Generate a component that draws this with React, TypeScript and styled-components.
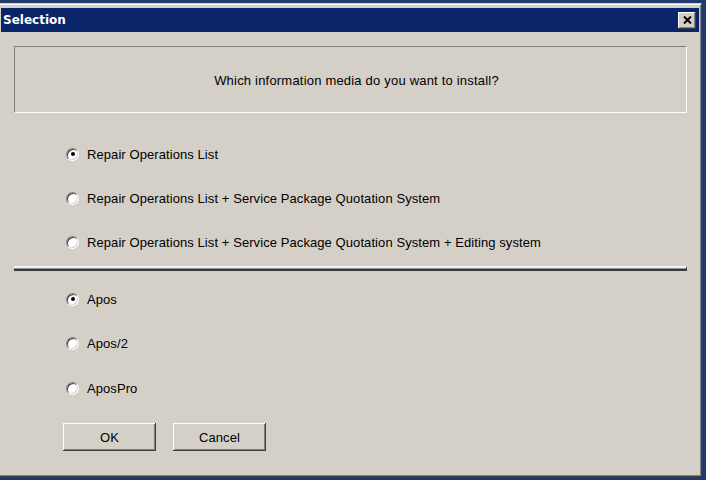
import styled, { createGlobalStyle } from 'styled-components';

const GlobalStyle = createGlobalStyle`
  html, body {
    margin: 0;
    padding: 0;
    background: #1f3a6b;
  }
  body {
    font-family: "Liberation Sans", Arial, sans-serif;
  }
`;

const Desktop = styled.div`
  width: 706px;
  height: 480px;
  background: #1f3a6b;
  display: flex;
  flex-direction: column;
  padding-top: 3px;
  box-sizing: border-box;
`;

const Window = styled.div`
  width: 702px;
  height: 474px;
  box-sizing: border-box;
  background: #d4d0c8;
  border-top: 1px solid #d4d0c8;
  border-right: 1px solid #404040;
  border-bottom: 1px solid #404040;
  box-shadow: inset 0 1px 0 #ffffff, inset -1px -1px 0 #808080;
  padding: 4px 2px 2px 1px;
  display: flex;
  flex-direction: column;
`;

const TitleBar = styled.div`
  height: 24px;
  background: #0a246a;
  display: flex;
  align-items: center;
  justify-content: space-between;
  padding: 0 3px 0 2px;
`;

const Title = styled.span`
  font-family: "DejaVu Sans", Tahoma, sans-serif;
  font-weight: bold;
  font-size: 12px;
  color: #ffffff;
`;

const CloseButton = styled.button`
  width: 18px;
  height: 17px;
  padding: 0;
  background: #d4d0c8;
  border: none;
  box-shadow: inset -1px -1px 0 #404040, inset 1px 1px 0 #ffffff,
    inset -2px -2px 0 #808080;
  display: flex;
  align-items: center;
  justify-content: center;
`;

const Body = styled.div`
  flex: 1;
  display: flex;
  flex-direction: column;
  padding: 14px 12px 0 13px;
  letter-spacing: 0.08px;
`;

const Header = styled.div`
  height: 67px;
  box-sizing: border-box;
  border-top: 1px solid #808080;
  border-left: 1px solid #808080;
  border-right: 1px solid #ffffff;
  border-bottom: 1px solid #ffffff;
  display: flex;
  align-items: center;
  justify-content: center;
  padding: 2px 0 0 12px;
  font-size: 13px;
  letter-spacing: 0.2px;
  color: #000;
`;

const Group = styled.div<{ $top: number; $gap: number }>`
  display: flex;
  flex-direction: column;
  gap: ${(p) => p.$gap}px;
  margin-top: ${(p) => p.$top}px;
  padding-left: 52px;
`;

const Row = styled.label`
  height: 22px;
  display: flex;
  align-items: center;
  gap: 8px;
  font-size: 13px;
  color: #000;
`;

const Radio = styled.span<{ $checked?: boolean }>`
  width: 13px;
  height: 13px;
  border-radius: 50%;
  box-sizing: border-box;
  background: #ffffff;
  border: 1px solid;
  border-color: #808080 #ffffff #ffffff #808080;
  box-shadow: inset 1px 1px 0 #404040, inset -1px -1px 0 #d4d0c8;
  display: flex;
  align-items: center;
  justify-content: center;
  flex-shrink: 0;

  &::after {
    content: '';
    width: 4px;
    height: 4px;
    border-radius: 50%;
    background: ${(p) => (p.$checked ? '#000' : 'transparent')};
  }
`;

const Separator = styled.div`
  height: 5px;
  margin-top: 13px;
  box-sizing: border-box;
  border-top: 2px solid #f4f4f4;
  border-bottom: 2px solid #3a3a3a;
  background: #909090;
  border-right: 1px solid #404040;
`;

const Buttons = styled.div`
  display: flex;
  gap: 17px;
  margin-top: 24px;
  padding-left: 49px;
`;

const Button = styled.button`
  width: 93px;
  height: 28px;
  background: #d4d0c8;
  border: none;
  box-shadow: inset -1px -1px 0 #404040, inset 1px 1px 0 #ffffff,
    inset -2px -2px 0 #808080;
  font-family: "Liberation Sans", Arial, sans-serif;
  font-size: 13px;
  letter-spacing: 0.08px;
  color: #000;
  padding: 0;
`;

const media = [
  'Repair Operations List',
  'Repair Operations List + Service Package Quotation System',
  'Repair Operations List + Service Package Quotation System + Editing system',
];

const systems = ['Apos', 'Apos/2', 'AposPro'];

export default function App() {
  return (
    <>
      <GlobalStyle />
      <Desktop>
        <Window>
          <TitleBar>
            <Title>Selection</Title>
            <CloseButton>
              <svg width="9" height="8" viewBox="0 0 9 8">
                <path d="M1 0.5 L8 7.5 M8 0.5 L1 7.5" stroke="#000" strokeWidth="2" />
              </svg>
            </CloseButton>
          </TitleBar>
          <Body>
            <Header>Which information media do you want to install?</Header>
            <Group $top={30} $gap={22}>
              {media.map((m, i) => (
                <Row key={m}>
                  <Radio $checked={i === 0} />
                  {m}
                </Row>
              ))}
            </Group>
            <Separator />
            <Group $top={17} $gap={22.5}>
              {systems.map((s, i) => (
                <Row key={s}>
                  <Radio $checked={i === 0} />
                  {s}
                </Row>
              ))}
            </Group>
            <Buttons>
              <Button>OK</Button>
              <Button>Cancel</Button>
            </Buttons>
          </Body>
        </Window>
      </Desktop>
    </>
  );
}
